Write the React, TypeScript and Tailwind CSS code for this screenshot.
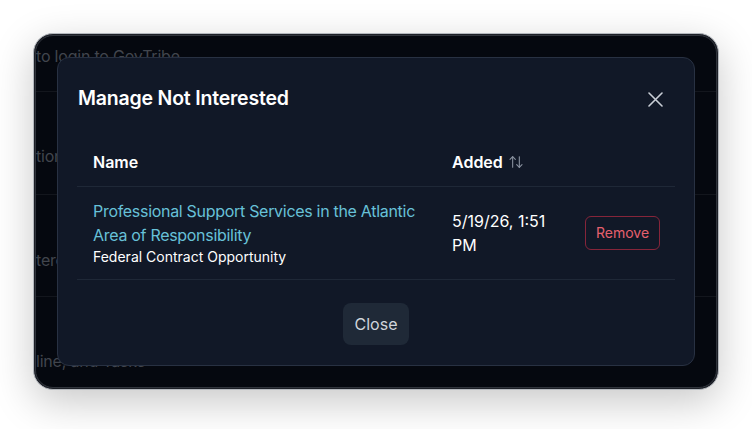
import React from "react";

function SortIcon() {
  return (
    <svg width="16" height="16" viewBox="0 0 24 24" fill="none" stroke="currentColor" strokeWidth="1.6" strokeLinecap="round" strokeLinejoin="round">
      <path d="m21 16-4 4-4-4" />
      <path d="M17 20V4" />
      <path d="m3 8 4-4 4 4" />
      <path d="M7 4v16" />
    </svg>
  );
}

function CloseIcon() {
  return (
    <svg width="15" height="15" viewBox="0 0 15 15" fill="none" stroke="currentColor" strokeWidth="1.6" strokeLinecap="round">
      <path d="M1 1l13 13M14 1L1 14" />
    </svg>
  );
}

export default function App() {
  return (
    <div
      className="w-[752px] h-[429px] bg-white px-[33px] pt-[33px]"
      style={{ fontFamily: "Inter, 'Noto Sans', sans-serif" }}
    >
      <div className="relative w-[686px] h-[357px] rounded-[20px] border border-[#b3b7bd] p-px bg-[#1c1f26] shadow-[0_12px_40px_rgba(0,0,0,0.22)]">
        {/* page behind the dialog */}
        <div className="h-full rounded-[18px] overflow-hidden bg-[#05080f] border border-[#30343c] flex flex-col text-[16px] text-[#41454d] tracking-[-0.2px]">
          <div className="h-[56px] shrink-0 border-b border-[#13161d] pt-[8px] leading-6">to login to GovTribe</div>
          <div className="h-[103px] shrink-0 border-b border-[#13161d] flex items-center pt-[26px]">tion</div>
          <div className="h-[102px] shrink-0 border-b border-[#13161d] flex items-center pt-[28px]">tere</div>
          <div className="flex-1 flex items-center pt-[38px]">line, and Tasks</div>
        </div>

        {/* dialog */}
        <div className="absolute left-[23px] top-[23px] w-[638px] h-[309px] rounded-[12px] border border-[#283142] bg-[#111827] px-[19px] pt-5 pb-5 flex flex-col">
          <div className="h-[42px] pl-px flex items-center justify-between">
            <h2 className="text-[19.5px] font-semibold text-white tracking-[-0.2px]">Manage Not Interested</h2>
            <button className="w-10 h-10 flex items-center justify-center text-[#c9ced6]">
              <CloseIcon />
            </button>
          </div>

          <table className="mt-[18px] w-full table-fixed border-collapse text-left">
            <colgroup>
              <col className="w-[359px]" />
              <col className="w-[133px]" />
              <col />
            </colgroup>
            <thead>
              <tr className="border-b border-[#1f2837]">
                <th className="px-4 py-3 text-[16px] leading-6 font-semibold text-white">Name</th>
                <th className="px-4 py-3 text-[16px] leading-6 font-semibold text-white">
                  <span className="flex items-center gap-[5px]">
                    Added
                    <span className="text-[#8b93a1]"><SortIcon /></span>
                  </span>
                </th>
                <th className="px-4 py-3"></th>
              </tr>
            </thead>
            <tbody>
              <tr className="border-b border-[#1f2837]">
                <td className="px-4 py-3 align-middle">
                  <a className="block text-[16px] leading-6 text-[#67c1d8] tracking-[-0.3px]">
                    Professional Support Services in the Atlantic Area of Responsibility
                  </a>
                  <div className="text-[14px] leading-5 text-white">Federal Contract Opportunity</div>
                </td>
                <td className="px-4 py-3 align-middle text-[16px] leading-6 text-white">5/19/26, 1:51 PM</td>
                <td className="px-4 py-3 align-middle text-right">
                  <button className="rounded-md border border-[#86253a] px-[10px] py-[6px] text-[14px] leading-5 text-[#e6606e]">
                    Remove
                  </button>
                </td>
              </tr>
            </tbody>
          </table>

          <div className="mt-auto flex justify-center">
            <button className="rounded-lg bg-[#1f2937] px-3 py-[9px] text-[16px] leading-6 text-[#d1d5db]">Close</button>
          </div>
        </div>
      </div>
    </div>
  );
}
